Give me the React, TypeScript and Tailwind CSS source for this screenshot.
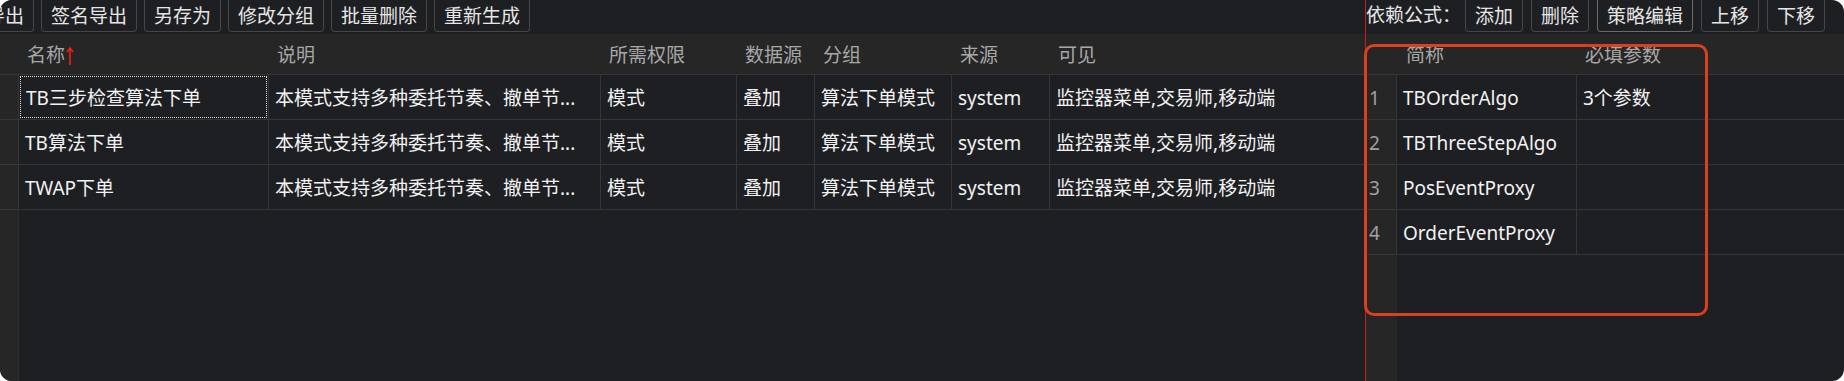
import React from "react";

const font = { fontFamily: '"Noto Sans", "Noto Sans CJK SC", sans-serif' };

const leftCols = "grid grid-cols-[19px_250px_332px_136px_78px_137px_98px_1fr]";
const rightCols = "grid grid-cols-[31px_180px_1fr]";

const rows = [
    ["TB三步检查算法下单", "本模式支持多种委托节奏、撤单节...", "模式", "叠加", "算法下单模式", "system", "监控器菜单,交易师,移动端"],
    ["TB算法下单", "本模式支持多种委托节奏、撤单节...", "模式", "叠加", "算法下单模式", "system", "监控器菜单,交易师,移动端"],
    ["TWAP下单", "本模式支持多种委托节奏、撤单节...", "模式", "叠加", "算法下单模式", "system", "监控器菜单,交易师,移动端"],
];

const deps = [
    ["1", "TBOrderAlgo", "3个参数"],
    ["2", "TBThreeStepAlgo", ""],
    ["3", "PosEventProxy", ""],
    ["4", "OrderEventProxy", ""],
];

function ToolButton({ label, active, className }: { label: string; active?: boolean; className?: string }) {
    return (
        <button
            className={
                "h-[32px] px-[9px] border border-t-0 rounded-b-[4px] bg-[#1e1f22] text-[#e6e6e6] text-[19px] leading-[30px] whitespace-nowrap shrink-0 " +
                (active ? "border-[#6b6b6b] " : "border-[#464646] ") +
                (className ?? "")
            }
        >
            {label}
        </button>
    );
}

function SortArrow() {
    return (
        <svg width="8" height="20" viewBox="0 0 8 20" className="inline-block ml-[1px] -mt-[2px]">
            <path d="M4 2 L4 19" stroke="#ff1a1a" strokeWidth="1.6" />
            <path d="M1 6 L4 2 L7 6" stroke="#ff1a1a" strokeWidth="1.6" fill="none" />
        </svg>
    );
}

function LeftPanel() {
    const headers = ["名称", "说明", "所需权限", "数据源", "分组", "来源", "可见"];
    return (
        <div className="w-[1365px] shrink-0 flex flex-col h-full">
            <div className="h-[34px] flex items-start gap-[7px] overflow-hidden">
                <ToolButton label="导出" className="ml-[-24px]" />
                <ToolButton label="签名导出" />
                <ToolButton label="另存为" />
                <ToolButton label="修改分组" />
                <ToolButton label="批量删除" />
                <ToolButton label="重新生成" />
            </div>
            <div className={leftCols + " h-[41px] bg-[#262626] border-b border-[#363636] text-[#a8a8a8] text-[19px] items-center pt-[2px]"}>
                <div />
                {headers.map((h, i) => (
                    <div key={h} className="pl-[8px] whitespace-nowrap">
                        {h}
                        {i === 0 && <SortArrow />}
                    </div>
                ))}
            </div>
            {rows.map((r, ri) => (
                <div key={ri} className={leftCols + " h-[45px] border-b border-[#363636] text-[#f2f2f2] text-[19px]"}>
                    <div className="bg-[#262626] border-r border-[#363636]" />
                    {r.map((c, ci) => (
                        <div
                            key={ci}
                            className={
                                "flex items-center whitespace-nowrap overflow-hidden " +
                                (ci < r.length - 1 ? "border-r border-[#363636] " : "") +
                                (ri === 0 && ci === 0 ? "p-[1px]" : "pl-[6px] pt-[3px]")
                            }
                        >
                            {ri === 0 && ci === 0 ? (
                                <div className="h-full w-full flex items-center pl-[5px] pt-[2px] border border-dotted border-[#e0e0e0]">{c}</div>
                            ) : (
                                c
                            )}
                        </div>
                    ))}
                </div>
            ))}
            <div className="flex-1 flex">
                <div className="w-[19px] bg-[#262626] border-r border-[#2e2e2e]" />
            </div>
        </div>
    );
}

function RightPanel() {
    return (
        <div className="flex-1 relative flex flex-col h-full border-l border-[#cc1d1d]">
            <div className="h-[34px] flex items-start text-[19px]">
                <span className="text-[#e6e6e6] leading-[30px] whitespace-nowrap">依赖公式：</span>
                <div className="flex gap-[8px] ml-[4px]">
                    <ToolButton label="添加" />
                    <ToolButton label="删除" />
                    <ToolButton label="策略编辑" active />
                    <ToolButton label="上移" />
                    <ToolButton label="下移" />
                </div>
            </div>
            <div className={rightCols + " h-[41px] bg-[#262626] border-b border-[#363636] text-[#a8a8a8] text-[19px] items-center pt-[2px]"}>
                <div />
                <div className="pl-[9px]">简称</div>
                <div className="pl-[8px]">必填参数</div>
            </div>
            {deps.map((d) => (
                <div key={d[0]} className={rightCols + " h-[45px] border-b border-[#363636] text-[19px]"}>
                    <div className="bg-[#262626] border-r border-[#363636] pl-[3px] pt-[3px] flex items-center text-[#a0a0a0]">{d[0]}</div>
                    <div className="border-r border-[#363636] pl-[6px] pt-[3px] flex items-center text-[#f2f2f2] whitespace-nowrap">{d[1]}</div>
                    <div className="pl-[6px] pt-[3px] flex items-center text-[#f2f2f2]">{d[2]}</div>
                </div>
            ))}
            <div className="flex-1 flex">
                <div className="w-[31px] bg-[#262626]" />
            </div>
            <div className="absolute left-[-2px] top-[44px] w-[344px] h-[272px] border-[3px] border-[#d9411e] rounded-[10px] pointer-events-none" />
        </div>
    );
}

export default function App() {
    return (
        <div className="w-[1844px] h-[381px] bg-white" style={font}>
            <div className="w-full h-full rounded-[12px] overflow-hidden bg-[#1e1f22] flex">
                <LeftPanel />
                <RightPanel />
            </div>
        </div>
    );
}
